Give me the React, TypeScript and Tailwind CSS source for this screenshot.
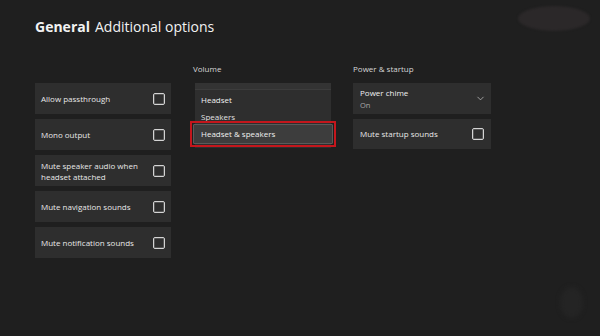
import { ChevronDown } from "lucide-react";

const font = { fontFamily: '"Open Sans", "Noto Sans", sans-serif' };

function Check() {
  return (
    <div className="w-[12px] h-[12px] shrink-0 rounded-[2px] border-[1.5px] border-[#d4d4d4] shadow-[inset_0_0_0_1px_#555]" />
  );
}

function ToggleRow({ label }: { label: string }) {
  return (
    <div className="flex items-center justify-between h-[31px] pl-[6px] pr-[6px] bg-[#2e2e2e]">
      <span className="text-[8px] leading-[11px] text-[#e8e8e8] max-w-[105px]">{label}</span>
      <Check />
    </div>
  );
}

export default function App() {
  const toggles = [
    "Allow passthrough",
    "Mono output",
    "Mute speaker audio when headset attached",
    "Mute navigation sounds",
    "Mute notification sounds",
  ];

  return (
    <div className="relative w-[600px] h-[336px] overflow-hidden bg-[#1f1f1f] text-white" style={font}>
      {/* blurred corner shapes */}
      <div className="absolute left-[518px] top-[6px] w-[72px] h-[25px] rounded-[50%] bg-[#2b2829] blur-[1px]" />
      <div className="absolute left-[560px] top-[287px] w-[23px] h-[31px] rounded-[50%] bg-[#242424] blur-[2px]" />

      <div className="relative pl-[35px] pt-[17px]">
        <h1 className="text-[14px] leading-[20px] text-[#f2f2f2]">
          <span className="font-bold">General</span>
          <span className="ml-[5px]">Additional options</span>
        </h1>

        <div className="flex mt-[27px]">
          {/* left column */}
          <div className="w-[136px] pt-[19px] flex flex-col gap-[5px]">
            {toggles.map((t) => (
              <ToggleRow key={t} label={t} />
            ))}
          </div>

          {/* volume */}
          <div className="w-[136px] ml-[24px]">
            <div className="h-[19px] text-[8px] leading-[10px] text-[#d6d6d6] -ml-[2px]">Volume</div>
            <div className="bg-[#2e2e2e] h-[65px]">
              <div className="h-[7px] bg-[#333333] border-b border-[#3c3c3c]" />
              <div className="h-[19px] flex items-center pl-[6px] text-[8px] text-[#f0f0f0] font-medium">Headset</div>
              <div className="h-[12px] overflow-hidden pl-[6px] text-[8px] leading-[12px] text-[#e0e0e0] pt-[2px]">Speakers</div>
              <div className="-mx-[5px] h-[26px] border-2 border-[#c4161c] p-[1px]">
                <div className="h-full bg-[#3d3d3d] border border-[#5a5a5a] rounded-[1px] flex items-center pl-[7px] text-[8px] text-[#f0f0f0]">
                  Headset &amp; speakers
                </div>
              </div>
            </div>
          </div>

          {/* power & startup */}
          <div className="w-[138px] ml-[22px]">
            <div className="h-[19px] text-[8px] leading-[10px] text-[#d6d6d6]">Power &amp; startup</div>
            <div className="flex flex-col gap-[5px]">
              <div className="h-[31px] bg-[#2e2e2e] flex items-center justify-between pl-[7px] pr-[5px]">
                <div className="flex flex-col">
                  <span className="text-[8px] leading-[13px] text-[#f0f0f0]">Power chime</span>
                  <span className="text-[7.5px] leading-[12px] text-[#a8a8a8]">On</span>
                </div>
                <ChevronDown size={11} strokeWidth={1.5} className="text-[#cfcfcf]" />
              </div>
              <div className="h-[30px] bg-[#2e2e2e] flex items-center justify-between pl-[7px] pr-[7px]">
                <span className="text-[8px] text-[#e8e8e8]">Mute startup sounds</span>
                <Check />
              </div>
            </div>
          </div>
        </div>
      </div>
    </div>
  );
}
